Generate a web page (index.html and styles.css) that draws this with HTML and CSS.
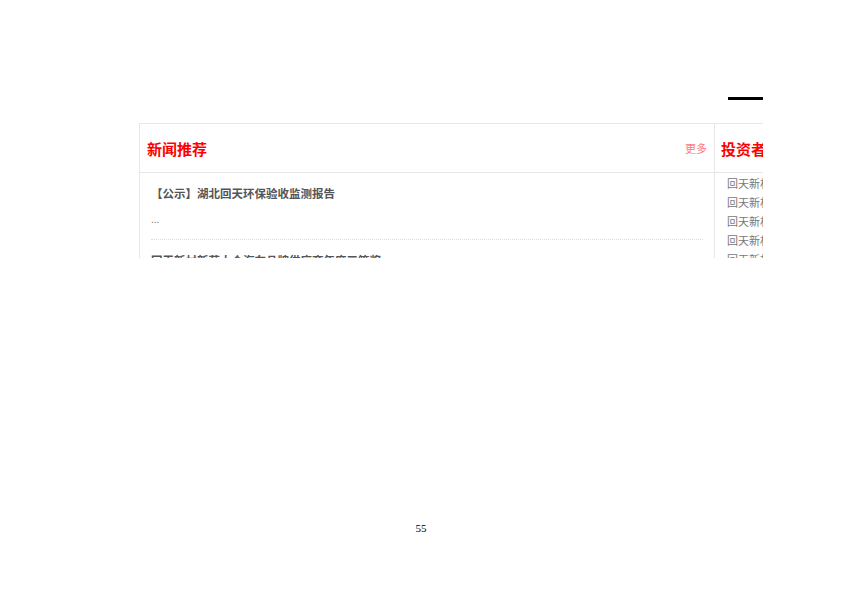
FILE: index.html
```html
<!DOCTYPE html>
<html lang="zh-CN">
<head>
  <meta charset="UTF-8" />
  <meta name="viewport" content="width=device-width, initial-scale=1.0" />
  <title>新闻推荐</title>
  <link rel="stylesheet" href="styles.css">
</head>
<body>

  <div class="page">
    <div class="clip">
      <div class="topbar"><div class="bar"></div></div>

      <div class="box">
        <!-- News column -->
        <div class="main">
          <div class="head">
            <span class="title">新闻推荐</span>
            <span class="more">更多</span>
          </div>
          <div class="list">
            <div class="item">
              <div class="item-title">【公示】湖北回天环保验收监测报告</div>
              <div class="item-desc">...</div>
            </div>
            <div class="item">
              <div class="item-title">回天新材新获大众汽车品牌供应商年度三等奖</div>
              <div class="item-desc">...</div>
            </div>
          </div>
        </div>

        <!-- Investor column -->
        <div class="side">
          <div class="head">
            <span class="title">投资者关系</span>
          </div>
          <div class="side-list">
            <div class="side-item">回天新材关于召开年度股东大会的通知</div>
            <div class="side-item">回天新材年度报告摘要</div>
            <div class="side-item">回天新材关于利润分配方案的公告</div>
            <div class="side-item">回天新材董事会决议公告</div>
            <div class="side-item">回天新材监事会决议公告</div>
          </div>
        </div>
      </div>
    </div>

    <div class="folio">55</div>
  </div>

</body>
</html>
```

FILE: styles.css
```css
/* Page */
body {
  margin: 0;
  background: #fff;
}

.page {
  width: 842px;
  height: 596px;
  padding: 97px 0 0 139px;
  box-sizing: border-box;
  display: flex;
  flex-direction: column;
  font-family: "Noto Sans CJK SC", "Noto Sans", sans-serif;
}

/* Visible part of the captured web page */
.clip {
  width: 624px;
  height: 161px;
  overflow: hidden;
}

.topbar {
  display: flex;
  justify-content: flex-end;
  height: 26px;
}

.bar {
  width: 35px;
  height: 3px;
  background: #000;
}

.box {
  display: flex;
  border-top: 1px solid #e6e6e6;
  border-left: 1px solid #e6e6e6;
}

/* Column headers */
.head {
  display: flex;
  align-items: center;
  justify-content: space-between;
  height: 48px;
  border-bottom: 1px solid #e6e6e6;
}

.title {
  color: #ff0000;
  font-size: 15px;
  font-weight: bold;
  white-space: nowrap;
}

.more {
  color: #ff7b7b;
  font-size: 11px;
}

/* News list */
.main {
  width: 574px;
  flex: none;
  border-right: 1px solid #e6e6e6;
}

.main .head {
  padding: 0 7px 0 7px;
}

.list {
  padding: 0 11px;
}

.item {
  padding: 11px 0 9px;
  border-bottom: 1px dotted #dcdcdc;
}

.item-title {
  color: #555;
  font-size: 11.5px;
  font-weight: bold;
  line-height: 18px;
  white-space: nowrap;
}

.item-desc {
  margin-top: 8px;
  padding-bottom: 2px;
  color: #8a7a5a;
  font-size: 10px;
  line-height: 18px;
}

/* Investor column */
.side {
  flex: none;
  width: 300px;
}

.side .head {
  padding-left: 6px;
}

.side-list {
  padding: 1px 0 0 12px;
}

.side-item {
  color: #777;
  font-size: 11px;
  line-height: 19px;
  white-space: nowrap;
}

/* Page number */
.folio {
  margin-top: auto;
  margin-left: -139px;
  padding-bottom: 62px;
  text-align: center;
  font-family: "Liberation Serif", serif;
  font-size: 11px;
  color: #000;
}
```
